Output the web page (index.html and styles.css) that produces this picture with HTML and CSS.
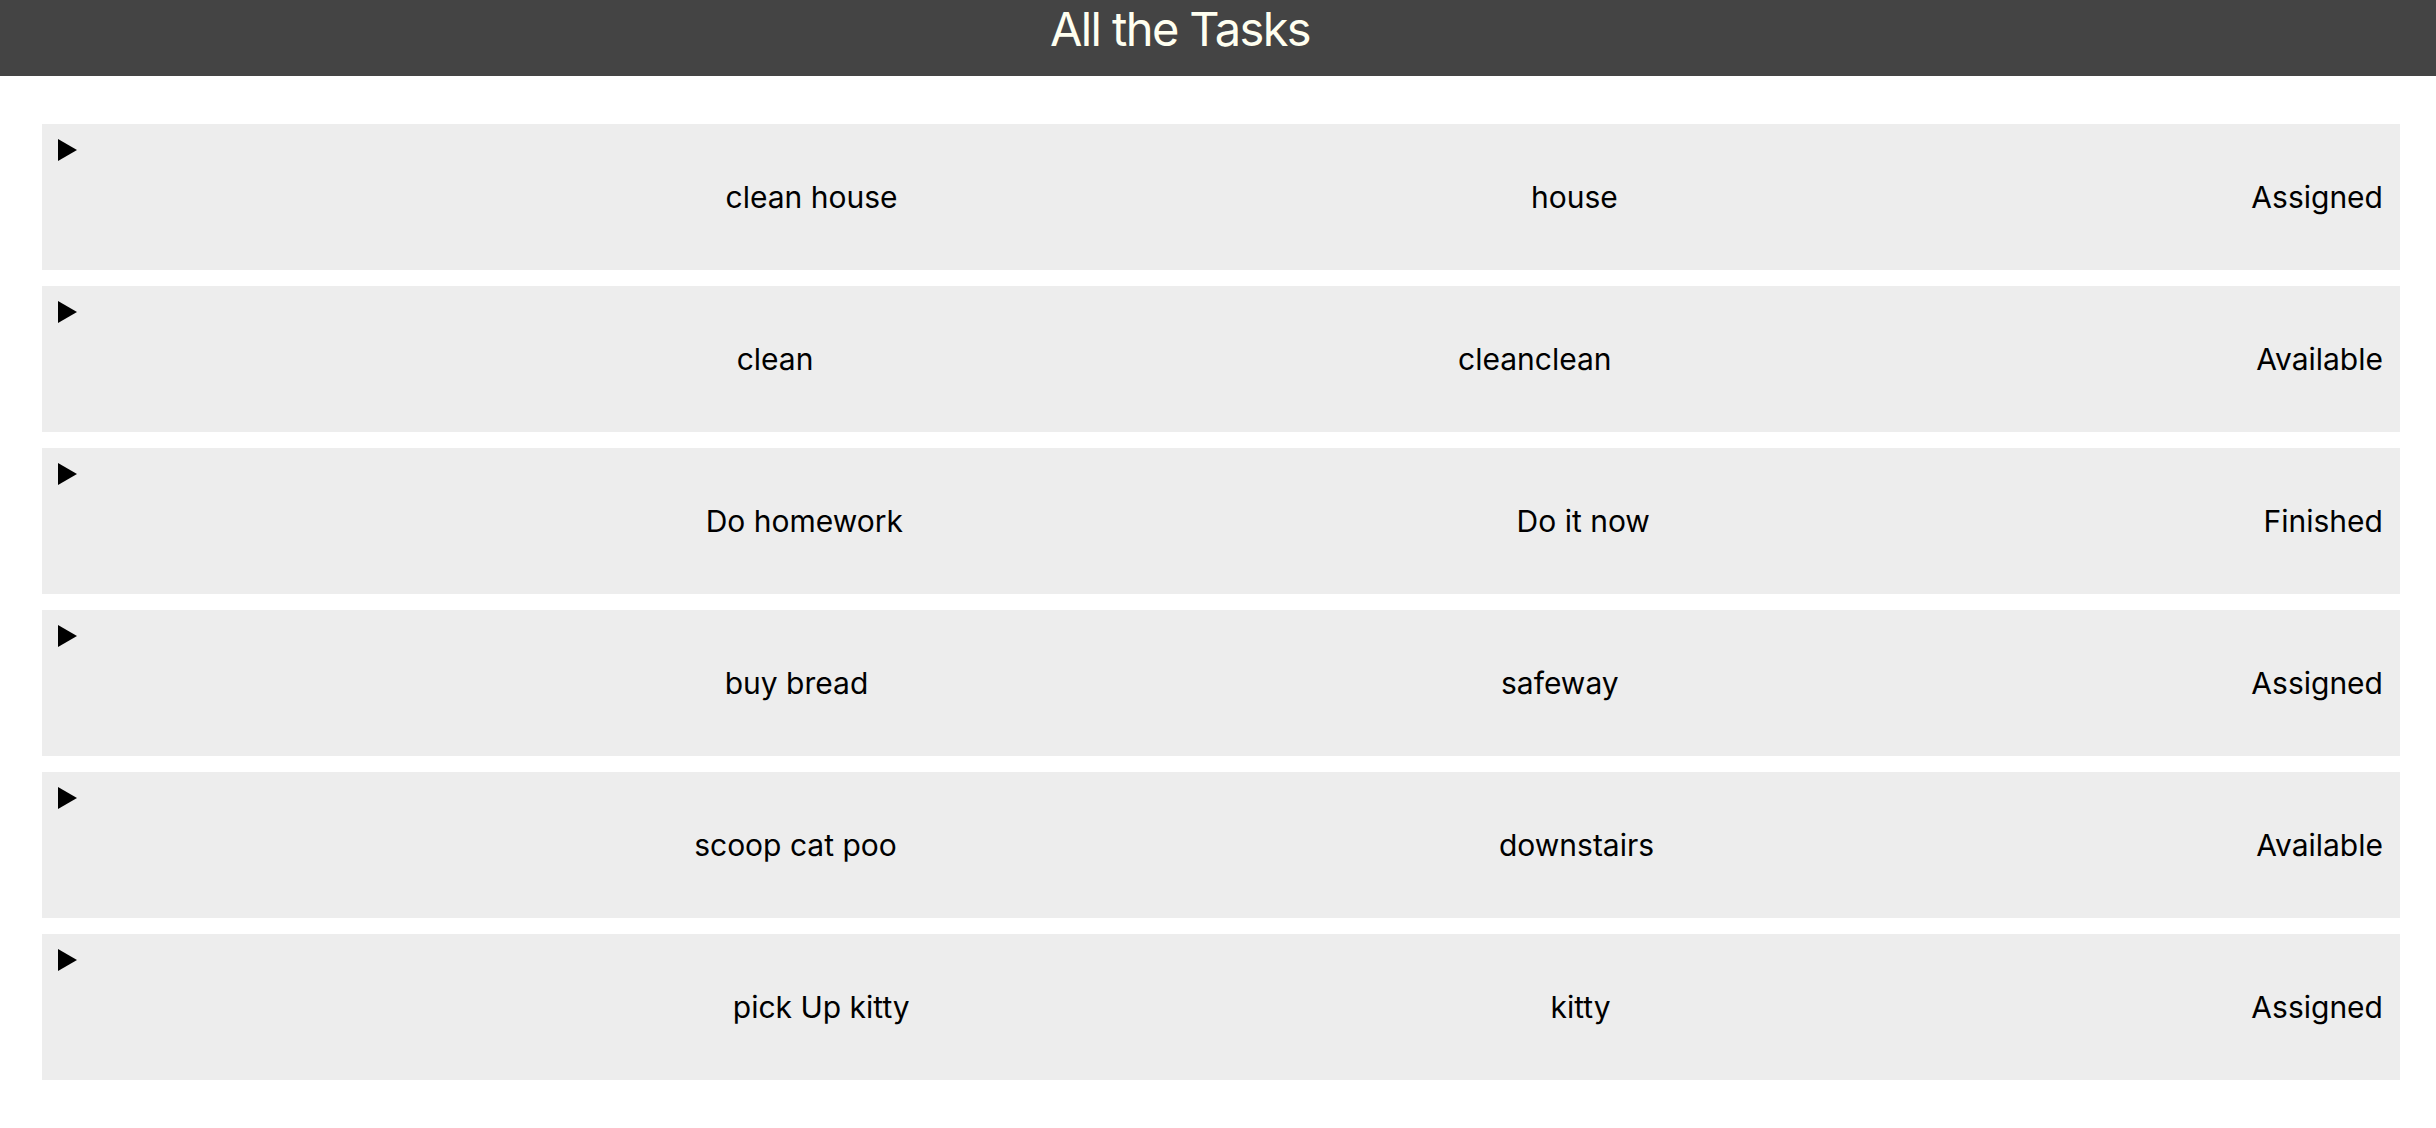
FILE: index.html
```html
<!DOCTYPE html>
<html lang="en">
<head>
<meta charset="utf-8">
<title>All the Tasks</title>
<link rel="stylesheet" href="styles.css">
</head>
<body>
<header class="topbar">
  <h1 class="title">All the Tasks</h1>
</header>
<main class="tasks">
  <div class="task">
    <span class="toggle"><svg width="19" height="22" viewBox="0 0 19 22"><polygon points="0,0 19,11 0,22" fill="#000"/></svg></span>
    <span class="cell">clean house</span>
    <span class="cell">house</span>
    <span class="cell">Assigned</span>
  </div>
  <div class="task">
    <span class="toggle"><svg width="19" height="22" viewBox="0 0 19 22"><polygon points="0,0 19,11 0,22" fill="#000"/></svg></span>
    <span class="cell">clean</span>
    <span class="cell">cleanclean</span>
    <span class="cell">Available</span>
  </div>
  <div class="task">
    <span class="toggle"><svg width="19" height="22" viewBox="0 0 19 22"><polygon points="0,0 19,11 0,22" fill="#000"/></svg></span>
    <span class="cell">Do homework</span>
    <span class="cell">Do it now</span>
    <span class="cell">Finished</span>
  </div>
  <div class="task">
    <span class="toggle"><svg width="19" height="22" viewBox="0 0 19 22"><polygon points="0,0 19,11 0,22" fill="#000"/></svg></span>
    <span class="cell">buy bread</span>
    <span class="cell">safeway</span>
    <span class="cell">Assigned</span>
  </div>
  <div class="task">
    <span class="toggle"><svg width="19" height="22" viewBox="0 0 19 22"><polygon points="0,0 19,11 0,22" fill="#000"/></svg></span>
    <span class="cell">scoop cat poo</span>
    <span class="cell">downstairs</span>
    <span class="cell">Available</span>
  </div>
  <div class="task">
    <span class="toggle"><svg width="19" height="22" viewBox="0 0 19 22"><polygon points="0,0 19,11 0,22" fill="#000"/></svg></span>
    <span class="cell">pick Up kitty</span>
    <span class="cell">kitty</span>
    <span class="cell">Assigned</span>
  </div>
</main>
</body>
</html>
```
FILE: styles.css
```css
html, body {
  margin: 0;
  padding: 0;
  background: #ffffff;
  font-family: Inter, "Noto Sans", "Liberation Sans", sans-serif;
  color: #000;
}

.topbar {
  height: 76px;
  background: #444444;
  display: flex;
  justify-content: center;
  align-items: flex-start;
  padding-right: 76px;
}

.title {
  margin: 0;
  font-size: 47px;
  font-weight: 400;
  line-height: 58px;
  color: #fffff0;
  letter-spacing: -1.6px;
}

.tasks {
  padding: 48px 36px 40px 42px;
  display: flex;
  flex-direction: column;
  gap: 16px;
}

.task {
  height: 146px;
  background: #ededed;
  display: flex;
  justify-content: space-between;
  align-items: center;
  padding: 0 17px 0 16px;
}

.toggle {
  align-self: flex-start;
  width: 34px;
  margin-top: 15px;
  display: flex;
}

.cell {
  font-size: 30px;
  line-height: 36px;
  white-space: nowrap;
}
```
